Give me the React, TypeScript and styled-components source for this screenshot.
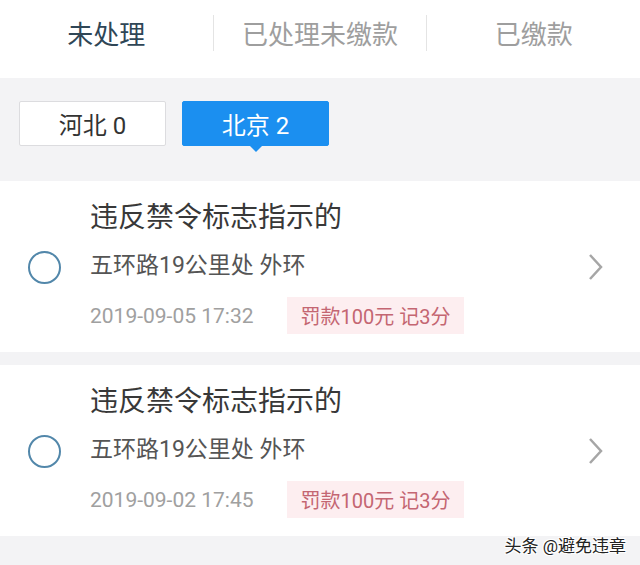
import React from 'react';
import styled, { createGlobalStyle } from 'styled-components';

const GlobalStyle = createGlobalStyle`
    html, body {
        margin: 0;
        padding: 0;
        background: #f3f3f5;
    }
    body {
        font-family: Roboto, "Noto Sans CJK SC", sans-serif;
    }
`;

const Page = styled.div`
    width: 640px;
    height: 565px;
    overflow: hidden;
    background: #f3f3f5;
    position: relative;
`;

const Tabs = styled.div`
    display: flex;
    align-items: center;
    height: 78px;
    background: #ffffff;
`;

const Tab = styled.div<{ active?: boolean }>`
    flex: 1;
    text-align: center;
    font-size: 26px;
    line-height: 36px;
    margin-top: -8px;
    color: ${(p) => (p.active ? '#2f4656' : '#9e9e9e')};
`;

const TabDivider = styled.div`
    width: 1px;
    height: 36px;
    margin-top: -12px;
    background: #e4e4e4;
`;

const Filters = styled.div`
    display: flex;
    gap: 16px;
    padding: 23px 19px 35px;
`;

const FilterButton = styled.div<{ active?: boolean }>`
    position: relative;
    width: 147px;
    height: 45px;
    box-sizing: border-box;
    display: flex;
    align-items: center;
    justify-content: center;
    font-size: 24px;
    border-radius: 2px;
    background: ${(p) => (p.active ? '#1b8ff0' : '#ffffff')};
    border: 1px solid ${(p) => (p.active ? '#1b8ff0' : '#dcdcdf')};
    color: ${(p) => (p.active ? '#ffffff' : '#333333')};

    &::after {
        content: '';
        display: ${(p) => (p.active ? 'block' : 'none')};
        position: absolute;
        left: 50%;
        bottom: -7px;
        margin-left: -7px;
        border-left: 7px solid transparent;
        border-right: 7px solid transparent;
        border-top: 7px solid #1b8ff0;
    }
`;

const List = styled.div`
    display: flex;
    flex-direction: column;
    gap: 13px;
`;

const Card = styled.div`
    display: flex;
    align-items: center;
    background: #ffffff;
    padding: 19px 36px 18px 0;
`;

const CheckCol = styled.div`
    width: 90px;
    display: flex;
    justify-content: center;
    padding-right: 2px;
    box-sizing: border-box;
`;

const Circle = styled.div`
    width: 33px;
    height: 33px;
    box-sizing: border-box;
    border-radius: 50%;
    border: 2px solid #5287aa;
`;

const Body = styled.div`
    flex: 1;
    display: flex;
    flex-direction: column;
`;

const Title = styled.div`
    font-size: 28px;
    line-height: 36px;
    color: #383838;
`;

const Address = styled.div`
    margin-top: 14px;
    font-size: 23px;
    line-height: 32px;
    color: #555555;
`;

const Meta = styled.div`
    margin-top: 15px;
    display: flex;
    align-items: center;
    gap: 33px;
`;

const DateText = styled.div`
    font-size: 21px;
    color: #a0a0a0;
`;

const Fine = styled.div`
    height: 37px;
    display: flex;
    align-items: center;
    padding: 0 14px;
    background: #fdeef0;
    color: #c46672;
    font-size: 20px;
`;

const Chevron = styled.svg`
    width: 16px;
    height: 28px;
`;

const Watermark = styled.div`
    position: absolute;
    right: 14px;
    bottom: 8px;
    font-size: 17px;
    color: #222222;
    text-shadow: 1px 1px 0 #ffffff, -1px -1px 0 #ffffff, 1px -1px 0 #ffffff, -1px 1px 0 #ffffff;
`;

const records = [
    { date: '2019-09-05 17:32' },
    { date: '2019-09-02 17:45' },
];

export default function App() {
    return (
        <Page>
            <GlobalStyle />
            <Tabs>
                <Tab active>未处理</Tab>
                <TabDivider />
                <Tab>已处理未缴款</Tab>
                <TabDivider />
                <Tab>已缴款</Tab>
            </Tabs>
            <Filters>
                <FilterButton>河北 0</FilterButton>
                <FilterButton active>北京 2</FilterButton>
            </Filters>
            <List>
                {records.map((r) => (
                    <Card key={r.date}>
                        <CheckCol>
                            <Circle />
                        </CheckCol>
                        <Body>
                            <Title>违反禁令标志指示的</Title>
                            <Address>五环路19公里处 外环</Address>
                            <Meta>
                                <DateText>{r.date}</DateText>
                                <Fine>罚款100元 记3分</Fine>
                            </Meta>
                        </Body>
                        <Chevron viewBox="0 0 16 28">
                            <path d="M2 2 L13 14 L2 26" fill="none" stroke="#a6a6a6" strokeWidth="2.5" />
                        </Chevron>
                    </Card>
                ))}
            </List>
            <Watermark>头条 @避免违章</Watermark>
        </Page>
    );
}
